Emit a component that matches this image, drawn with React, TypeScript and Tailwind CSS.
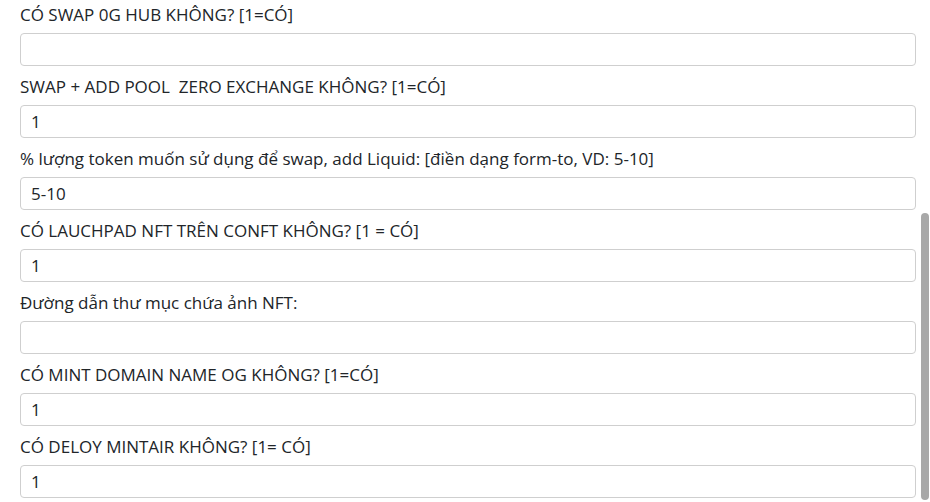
import { useState } from "react";

const fields = [
  { label: "CÓ SWAP 0G HUB KHÔNG? [1=CÓ]", value: "" },
  { label: "SWAP + ADD POOL\u00a0 ZERO EXCHANGE KHÔNG? [1=CÓ]", value: "1" },
  { label: "% lượng token muốn sử dụng để swap, add Liquid: [điền dạng form-to, VD: 5-10]", value: "5-10" },
  { label: "CÓ LAUCHPAD NFT TRÊN CONFT KHÔNG? [1 = CÓ]", value: "1" },
  { label: "Đường dẫn thư mục chứa ảnh NFT:", value: "" },
  { label: "CÓ MINT DOMAIN NAME OG KHÔNG? [1=CÓ]", value: "1" },
  { label: "CÓ DELOY MINTAIR KHÔNG? [1= CÓ]", value: "1" },
];

function Field({ label, initial }: { label: string; initial: string }) {
  const [value, setValue] = useState(initial);
  return (
    <div className="flex flex-col">
      <label className="h-6 leading-6 mb-[6px] text-[17px] text-[#212529] whitespace-nowrap">{label}</label>
      <input
        value={value}
        onChange={(e) => setValue(e.target.value)}
        className="h-[33px] w-full rounded-[4px] border border-[#cfcfcf] bg-white px-[10px] text-[17px] text-[#212529] outline-none"
      />
    </div>
  );
}

export default function App() {
  return (
    <div
      className="relative h-[502px] w-[930px] overflow-hidden bg-white"
      style={{ fontFamily: '"Open Sans", "Noto Sans", sans-serif' }}
    >
      <div className="flex flex-col gap-[9px] pt-[3px] pl-5 pr-[14px]">
        {fields.map((f) => (
          <Field key={f.label} label={f.label} initial={f.value} />
        ))}
      </div>
      {/* scrollbar thumb */}
      <div className="absolute right-[1px] top-[213px] h-[287px] w-2 rounded-full bg-[#a8a8a8]" />
    </div>
  );
}
